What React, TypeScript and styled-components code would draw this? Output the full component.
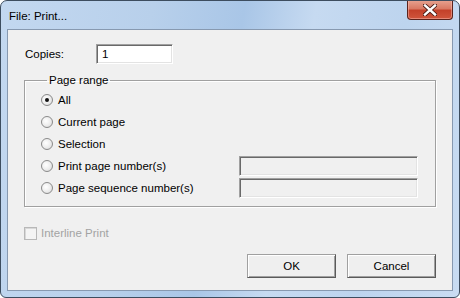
import React from 'react'
import styled, { createGlobalStyle } from 'styled-components'

const GlobalStyle = createGlobalStyle`
  html, body {
    margin: 0;
    padding: 0;
    background: #ffffff;
  }
  body {
    font-family: "Liberation Sans", Arial, sans-serif;
    font-size: 11.5px;
    color: #000000;
  }
`

const Window = styled.div`
  width: 460px;
  height: 298px;
  box-sizing: border-box;
  border: 1px solid #3d4d5f;
  border-radius: 7px 7px 6px 6px;
  background: linear-gradient(100deg, #c3d8f0 0%, #b8d0eb 30%, #a9c6e7 48%, #c6daf1 62%, #bdd4ee 80%, #c9dcf2 100%);
  padding: 0 6px 6px;
  display: flex;
  flex-direction: column;
  overflow: hidden;
`

const TitleBar = styled.div`
  height: 28px;
  display: flex;
  align-items: flex-start;
  justify-content: space-between;
`

const Title = styled.span`
  margin: 8px 0 0 2px;
  font-size: 11.5px;
  line-height: 14px;
  color: #000;
`

const CloseButton = styled.div`
  width: 46px;
  height: 20px;
  margin-top: -1px;
  box-sizing: border-box;
  border: 1px solid #5b231c;
  border-top: none;
  border-radius: 0 0 4px 4px;
  background: linear-gradient(to bottom, #e8a492 0%, #d97a64 45%, #c4412a 55%, #d0553c 100%);
  box-shadow: inset 0 0 0 1px rgba(255, 200, 190, 0.45);
  display: flex;
  align-items: center;
  justify-content: center;
`

const Client = styled.div`
  flex: 1;
  border: 1px solid #8799b0;
  background: #f0f0f0;
  padding: 14px 16px 0 16px;
  display: flex;
  flex-direction: column;
`

const CopiesRow = styled.div`
  display: flex;
  align-items: center;
  height: 20px;
  padding-left: 1px;
`

const Label = styled.span`
  width: 71px;
`

const Field = styled.div<{ $width: number; $disabled?: boolean }>`
  width: ${p => p.$width}px;
  height: 20px;
  box-sizing: border-box;
  border: 1px solid;
  border-color: #a0a0a0 #ffffff #ffffff #a0a0a0;
  box-shadow: inset 1px 1px 0 #696969, inset -1px -1px 0 #e3e3e3;
  background: ${p => (p.$disabled ? '#f0f0f0' : '#ffffff')};
  padding: 2px 0 0 5px;
  line-height: 15px;
`

const Group = styled.fieldset`
  margin: 9px 0 0 0;
  width: 412px;
  box-sizing: border-box;
  min-inline-size: 0;
  border: 1px solid #a0a0a0;
  box-shadow: inset 1px 1px 0 #ffffff, 1px 1px 0 #ffffff;
  padding: 2px 17px 7px 16px;
`

const Legend = styled.legend`
  margin-left: 6px;
  padding: 0 2px 0 2px;
  line-height: 14px;
`

const RangeGrid = styled.div`
  display: grid;
  grid-template-columns: 1fr 179px;
  grid-auto-rows: 22px;
  align-items: center;
`

const RadioRow = styled.div`
  display: flex;
  align-items: center;
  gap: 5px;
  grid-column: 1;
`

const Radio = styled.span<{ $checked?: boolean }>`
  width: 12px;
  height: 12px;
  box-sizing: border-box;
  border-radius: 50%;
  border: 1px solid #8a8a8a;
  background: radial-gradient(circle at 40% 40%, #ffffff 0%, #eeeeee 50%, #d4d4d4 100%);
  display: flex;
  align-items: center;
  justify-content: center;

  &::after {
    content: '';
    display: ${p => (p.$checked ? 'block' : 'none')};
    width: 4px;
    height: 4px;
    border-radius: 50%;
    background: #111;
  }
`

const FieldCell = styled.div`
  grid-column: 2;
  display: flex;
  align-items: center;
`

const CheckRow = styled.div`
  display: flex;
  align-items: center;
  gap: 4px;
  height: 14px;
  margin-top: 19px;
  color: #a3a3a3;
`

const CheckBox = styled.span`
  width: 13px;
  height: 13px;
  box-sizing: border-box;
  border: 1px solid #b8b8b8;
  box-shadow: inset 1px 1px 0 #d8d8d8;
  background: #f4f4f4;
`

const ButtonRow = styled.div`
  display: flex;
  justify-content: flex-end;
  gap: 11px;
  margin-top: 14px;
`

const Button = styled.button`
  width: 89px;
  height: 24px;
  box-sizing: border-box;
  margin: 0;
  padding: 0;
  font-family: inherit;
  font-size: 11.5px;
  color: #000;
  background: #efefef;
  border: 1px solid;
  border-color: #a0a0a0 #5a5a5a #5a5a5a #a0a0a0;
  box-shadow: inset 1px 1px 0 #ffffff, inset -1px -1px 0 #a0a0a0;
  border-radius: 0;
`

const CloseIcon = () => (
  <svg width="14" height="12" viewBox="0 0 14 12">
    <path d="M2 1.5 L12 10.5 M12 1.5 L2 10.5" stroke="#4a1a14" strokeWidth="4.2" strokeLinecap="square" />
    <path d="M2 1.5 L12 10.5 M12 1.5 L2 10.5" stroke="#ffffff" strokeWidth="2.4" strokeLinecap="square" />
  </svg>
)

const ranges = [
  { label: 'All', checked: true, field: false },
  { label: 'Current page', checked: false, field: false },
  { label: 'Selection', checked: false, field: false },
  { label: 'Print page number(s)', checked: false, field: true },
  { label: 'Page sequence number(s)', checked: false, field: true }
]

const App: React.FC = () => {
  return (
    <>
      <GlobalStyle />
      <Window>
        <TitleBar>
          <Title>File: Print...</Title>
          <CloseButton>
            <CloseIcon />
          </CloseButton>
        </TitleBar>
        <Client>
          <CopiesRow>
            <Label>Copies:</Label>
            <Field $width={77}>1</Field>
          </CopiesRow>
          <Group>
            <Legend>Page range</Legend>
            <RangeGrid>
              {ranges.map(r => (
                <React.Fragment key={r.label}>
                  <RadioRow>
                    <Radio $checked={r.checked} />
                    <span>{r.label}</span>
                  </RadioRow>
                  {r.field && (
                    <FieldCell>
                      <Field $width={179} $disabled />
                    </FieldCell>
                  )}
                </React.Fragment>
              ))}
            </RangeGrid>
          </Group>
          <CheckRow>
            <CheckBox />
            <span>Interline Print</span>
          </CheckRow>
          <ButtonRow>
            <Button>OK</Button>
            <Button>Cancel</Button>
          </ButtonRow>
        </Client>
      </Window>
    </>
  )
}

export default App
